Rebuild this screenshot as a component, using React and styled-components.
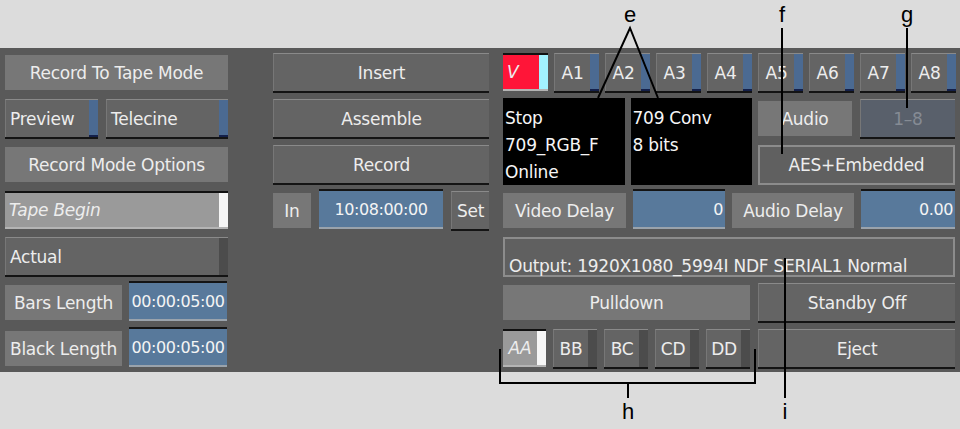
import React from 'react'
import styled, { createGlobalStyle, css } from 'styled-components'

const GlobalStyle = createGlobalStyle`
  html, body {
    margin: 0;
    padding: 0;
    background: #dcdcdc;
  }
`

const Page = styled.div`
  position: relative;
  width: 960px;
  height: 429px;
  padding-top: 48px;
  box-sizing: border-box;
  background: #dcdcdc;
  overflow: hidden;
  font-family: 'DejaVu Sans', 'Liberation Sans', sans-serif;
`

const Panel = styled.div`
  height: 324px;
  background: #595959;
  display: flex;
  padding: 5px 0 0 5px;
  box-sizing: border-box;
`

const Column = styled.div`
  display: flex;
  flex-direction: column;
  gap: 6px;
  width: ${(p) => p.$w}px;
  margin-right: ${(p) => p.$mr || 0}px;
`

const Row = styled.div`
  display: flex;
  gap: ${(p) => (p.$gap === undefined ? 7 : p.$gap)}px;
  height: ${(p) => p.$h || 40}px;
  align-items: flex-start;
`

const Text = css`
  color: #ededed;
  font-size: 17px;
  letter-spacing: -0.25px;
  white-space: nowrap;
`

const Button = styled.div`
  ${Text};
  display: flex;
  flex: ${(p) => (p.$w ? `0 0 ${p.$w}px` : '1')};
  height: 38px;
  box-sizing: border-box;
  background: ${(p) => p.$bg || '#646464'};
  ${(p) =>
    p.$pressed
      ? css`
          border-top: 2px solid #111;
          border-bottom: 2px solid #b4b4b4;
        `
      : css`
          border-top: 1px solid #8a8a8a;
          border-left: 1px solid #777;
          box-shadow: 0 2px 0 #141414;
        `}
  ${(p) =>
    p.$dim &&
    css`
      color: #858b94;
    `}
  ${(p) =>
    p.$italic &&
    css`
      font-style: italic;
    `}
`

const Face = styled.div`
  flex: 1;
  display: flex;
  align-items: center;
  justify-content: ${(p) => (p.$left ? 'flex-start' : 'center')};
  padding-left: ${(p) => (p.$left ? 4 : 0)}px;
`

const Strip = styled.div`
  width: 9px;
  background: ${(p) => p.$color};
  box-shadow: inset 0 -2px 0 ${(p) => p.$edge || 'transparent'};
`

const Label = styled.div`
  ${Text};
  flex: ${(p) => (p.$w ? `0 0 ${p.$w}px` : '1')};
  height: 35px;
  margin-top: 2px;
  background: #777;
  display: flex;
  align-items: center;
  justify-content: center;
`

const Field = styled.div`
  ${Text};
  font-size: 16px;
  letter-spacing: -0.4px;
  flex: ${(p) => (p.$w ? `0 0 ${p.$w}px` : '1')};
  height: 40px;
  margin-top: -2px;
  box-sizing: border-box;
  background: #58799b;
  border-top: 2px solid #141414;
  border-bottom: 2px solid #9aa3ac;
  display: flex;
  align-items: center;
  justify-content: ${(p) => (p.$right ? 'flex-end' : 'center')};
  padding-right: ${(p) => (p.$right ? 2 : 0)}px;
  color: #f4f4f4;
`

const Info = styled.div`
  ${Text};
  flex: 1;
  height: 87px;
  margin-top: -1px;
  background: #000;
  padding: 7px 0 0 2px;
  box-sizing: border-box;
  line-height: 27px;
  color: #f6f6f6;
`

const Boxed = styled.div`
  ${Text};
  flex: ${(p) => (p.$w ? `0 0 ${p.$w}px` : '1')};
  height: 40px;
  box-sizing: border-box;
  border: 2px solid #8c8c8c;
  background: #606060;
  display: flex;
  align-items: ${(p) => (p.$bottom ? 'flex-end' : 'center')};
  justify-content: ${(p) => (p.$bottom ? 'flex-start' : 'center')};
  padding: ${(p) => (p.$bottom ? '0 0 1px 4px' : '0')};
  line-height: ${(p) => (p.$bottom ? 16 : 26)}px;
`

const InfoArea = styled.div`
  display: flex;
  gap: 6px;
  height: 86px;
`

const SideStack = styled.div`
  display: flex;
  flex-direction: column;
  gap: 6px;
  width: 197px;
`

const Overlay = styled.svg`
  position: absolute;
  left: 0;
  top: 0;
  pointer-events: none;
`

const CalloutText = styled.text`
  font-family: 'Liberation Sans', Arial, sans-serif;
  font-size: 22px;
  fill: #000;
`

const tracks = ['A1', 'A2', 'A3', 'A4', 'A5', 'A6', 'A7', 'A8']
const pulldown = ['BB', 'BC', 'CD', 'DD']

const BLUE = '#4b6a92'

export default function App() {
  return (
    <>
      <GlobalStyle />
      <Page>
        <Panel>
          <Column $w={223} $mr={45}>
            <Row>
              <Label>Record To Tape Mode</Label>
            </Row>
            <Row $gap={8}>
              <Button $w={93}>
                <Face $left>Preview</Face>
                <Strip $color={BLUE} $edge="#14204a" />
              </Button>
              <Button>
                <Face $left>Telecine</Face>
                <Strip $color={BLUE} $edge="#14204a" />
              </Button>
            </Row>
            <Row>
              <Label>Record Mode Options</Label>
            </Row>
            <Row>
              <Button $pressed $italic $bg="#9a9a9a">
                <Face $left>Tape Begin</Face>
                <Strip $color="#f6f6f6" />
              </Button>
            </Row>
            <Row>
              <Button>
                <Face $left>Actual</Face>
                <Strip $color="#4c4c4c" />
              </Button>
            </Row>
            <Row>
              <Label $w={117}>Bars Length</Label>
              <Field $w={98}>00:00:05:00</Field>
            </Row>
            <Row>
              <Label $w={117}>Black Length</Label>
              <Field $w={98}>00:00:05:00</Field>
            </Row>
          </Column>

          <Column $w={216} $mr={14}>
            <Row>
              <Button>
                <Face>Insert</Face>
              </Button>
            </Row>
            <Row>
              <Button>
                <Face>Assemble</Face>
              </Button>
            </Row>
            <Row>
              <Button>
                <Face>Record</Face>
              </Button>
            </Row>
            <Row $gap={8}>
              <Label $w={38}>In</Label>
              <Field $w={124}>10:08:00:00</Field>
              <Button $w={38}>
                <Face>Set</Face>
              </Button>
            </Row>
          </Column>

          <Column $w={452}>
            <Row $gap={6}>
              <Button $w={45} $pressed $italic $bg="#ff1538">
                <Face $left>V</Face>
                <Strip $color="#a2f2ff" />
              </Button>
              {tracks.map((t) => (
                <Button key={t} $w={45}>
                  <Face>{t}</Face>
                  <Strip $color={BLUE} $edge="#14204a" />
                </Button>
              ))}
            </Row>
            <InfoArea>
              <Info>
                Stop
                <br />
                709_RGB_F
                <br />
                Online
              </Info>
              <Info>
                709 Conv
                <br />8 bits
              </Info>
              <SideStack>
                <Row $gap={8}>
                  <Label $w={94}>Audio</Label>
                  <Button $dim $bg="#59606b">
                    <Face>1–8</Face>
                  </Button>
                </Row>
                <Row>
                  <Boxed>AES+Embedded</Boxed>
                </Row>
              </SideStack>
            </InfoArea>
            <Row>
              <Label $w={123}>Video Delay</Label>
              <Field $w={92} $right>
                0
              </Field>
              <Label $w={122}>Audio Delay</Label>
              <Field $right>0.00</Field>
            </Row>
            <Row>
              <Boxed $bottom>Output: 1920X1080_5994I NDF SERIAL1 Normal</Boxed>
            </Row>
            <Row $gap={8}>
              <Label $w={247}>Pulldown</Label>
              <Button>
                <Face>Standby Off</Face>
              </Button>
            </Row>
            <Row $gap={8}>
              <Row $gap={7} $h={38}>
                <Button $w={43} $pressed $italic $bg="#9a9a9a">
                  <Face>AA</Face>
                  <Strip $color="#f6f6f6" />
                </Button>
                {pulldown.map((p) => (
                  <Button key={p} $w={44}>
                    <Face>{p}</Face>
                    <Strip $color="#4c4c4c" />
                  </Button>
                ))}
              </Row>
              <Button>
                <Face>Eject</Face>
              </Button>
            </Row>
          </Column>
        </Panel>

        <Overlay width="960" height="429" viewBox="0 0 960 429">
          <g stroke="#000" strokeWidth="2" fill="none">
            <polyline points="598,98 630,28 658,98" />
            <line x1="782" y1="28" x2="782" y2="154" />
            <line x1="907" y1="28" x2="907" y2="108" />
            <polyline points="500,349 500,383 755,383 755,349" />
            <line x1="628" y1="383" x2="628" y2="398" />
            <line x1="785" y1="258" x2="785" y2="398" />
          </g>
          <CalloutText x="630" y="22" textAnchor="middle">e</CalloutText>
          <CalloutText x="782" y="22" textAnchor="middle">f</CalloutText>
          <CalloutText x="907" y="22" textAnchor="middle">g</CalloutText>
          <CalloutText x="628" y="419" textAnchor="middle">h</CalloutText>
          <CalloutText x="785" y="419" textAnchor="middle">i</CalloutText>
        </Overlay>
      </Page>
    </>
  )
}
